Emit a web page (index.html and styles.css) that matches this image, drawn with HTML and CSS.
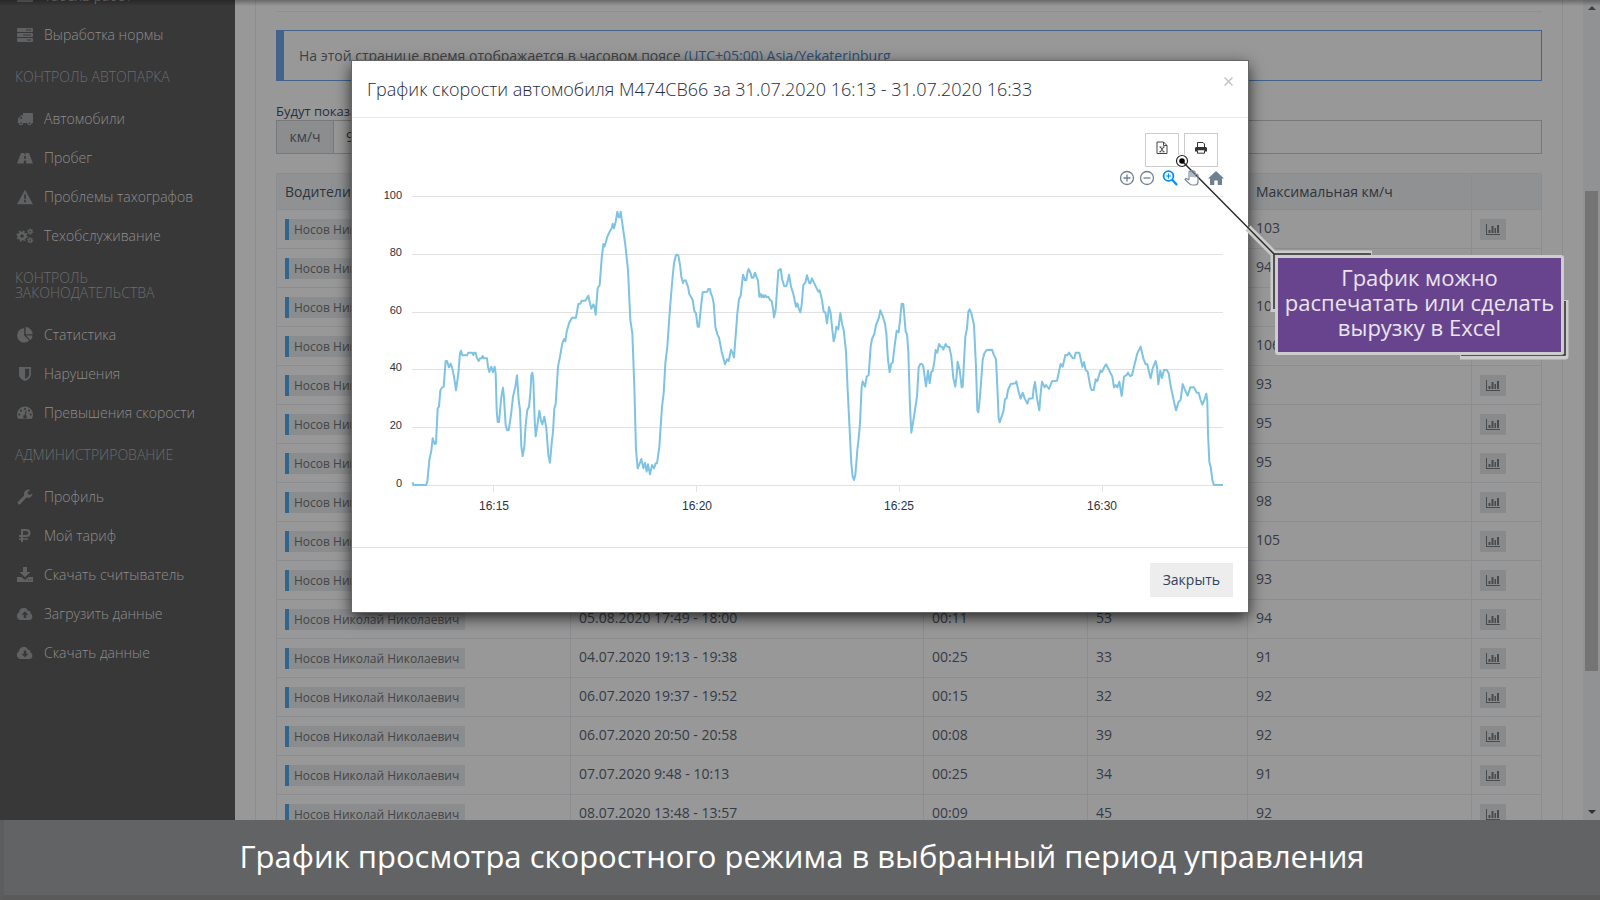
FILE: index.html
```html
<!DOCTYPE html>
<html lang="ru">
<head>
<meta charset="utf-8">
<title>График скорости</title>
<link rel="stylesheet" href="styles.css">
</head>
<body>
<svg class="sprite" aria-hidden="true">
  <symbol id="i-calendar" viewBox="0 0 16 16"><path d="M0 2h16v12H0z"/></symbol>
  <symbol id="i-server" viewBox="0 0 16 16"><path fill-rule="evenodd" d="M.8 1h14.4l.8.8v2.6l-.8.6H.8L0 4.400V1.800zM9 2.500v1h5v-1zM.8 6h14.400l.8.8v2.600l-.8.6H.8L0 9.400V6.800zM6 7.500v1h8v-1zM.8 11h14.400l.8.8v2.400l-.8.8H.8l-.8-.8v-2.400zM10 12.500v1h4v-1z"/></symbol>
  <symbol id="i-truck" viewBox="0 0 16 16"><path fill-rule="evenodd" d="M6 2h9.500l.5.5V12h-1.500a2 2 0 0 1-4 0H6a2 2 0 0 1-4 0H.5v-1l.5-.5V7.500L4 4.300h2zM4.400 5.500L2.300 7.800H5V5.500z"/><circle cx="4" cy="12.300" r="2"/><circle cx="12.500" cy="12.300" r="2"/><circle class="hole" cx="4" cy="12.300" r=".9"/><circle class="hole" cx="12.500" cy="12.300" r=".9"/></symbol>
  <symbol id="i-road" viewBox="0 0 16 16"><path fill-rule="evenodd" d="M4 3h3.500l-.2 1.500h1.400L8.500 3H12l4 10.500H9.300L9 10.500H7l-.3 3H0zM7.200 6L7 8.800h2L8.800 6z"/></symbol>
  <symbol id="i-warn" viewBox="0 0 16 16"><path fill-rule="evenodd" d="M8 .8L16 15.200H0zM7 5.500l.3 4.800h1.400L9 5.500zM7 11.300v2h2v-2z"/></symbol>
  <symbol id="i-cogs" viewBox="0 0 17 16"><g fill="none" stroke="currentColor"><circle cx="5.500" cy="8" r="3.100" stroke-width="2.500"/><circle cx="5.500" cy="8" r="4.900" stroke-width="1.500" stroke-dasharray="2 1.850"/><circle cx="13.700" cy="3.600" r="1.600" stroke-width="1.500"/><circle cx="13.700" cy="3.600" r="2.700" stroke-width="1" stroke-dasharray="1.400 1.430"/><circle cx="13.700" cy="12.300" r="1.600" stroke-width="1.500"/><circle cx="13.700" cy="12.300" r="2.700" stroke-width="1" stroke-dasharray="1.400 1.430"/></g></symbol>
  <symbol id="i-pie" viewBox="0 0 16 16"><path d="M7.200 1.200v7.300l5.100 5.100A7.200 7.200 0 1 1 7.200 1.200zM8.600 0a7.200 7.200 0 0 1 7 7.200h-7zM9 8.500h6.600a7.200 7.200 0 0 1-2 4.800z"/></symbol>
  <symbol id="i-shield" viewBox="0 0 16 16"><path fill-rule="evenodd" d="M2 1h12v7c0 4-3 5.700-6 7-3-1.300-6-3-6-7zM8 2.800V13c2.300-1.200 4.200-2.500 4.200-5V2.800z"/></symbol>
  <symbol id="i-gauge" viewBox="0 0 16 16"><path d="M0 9.500a8 8 0 0 1 16 0c0 1.600-.5 3-1.200 4.300H1.200A8 8 0 0 1 0 9.500z"/><g class="hole"><circle cx="2.300" cy="9.600" r="1.100"/><circle cx="4" cy="5.600" r="1.100"/><circle cx="8" cy="4" r="1.100"/><circle cx="12" cy="5.600" r="1.100"/><circle cx="13.700" cy="9.600" r="1.100"/><path d="M8.700 5.800l.9.300-.8 4a1.800 1.800 0 1 1-1.100-.2z"/></g></symbol>
  <symbol id="i-wrench" viewBox="0 0 16 16"><path d="M1 12.800l6.200-6.200A4.600 4.600 0 0 1 13.500.900L10.800 2.700v2.200l2 1.100 2.700-1.700c.2 2.700-2.500 5.500-6 4.300L3.300 15a1.600 1.600 0 0 1-2.300-2.200z"/></symbol>
  <symbol id="i-rub" viewBox="0 0 16 16"><path fill-rule="evenodd" d="M4 1h5.500a4 4 0 0 1 0 8H6v1.200h5v1.600H6V14H4v-2.200H2v-1.600h2V9H2V7h2zm2 1.900V7h3.300a2 2 0 0 0 0-4.100z"/></symbol>
  <symbol id="i-download" viewBox="0 0 16 16"><path fill-rule="evenodd" d="M6 0h4v5h3.500L8 10.300 2.500 5H6zM0 10h4.500L8 13l3.500-3H16v5H0zM11 12.300v1h1v-1zM13.300 12.300v1h1v-1z"/></symbol>
  <symbol id="i-cloudup" viewBox="0 0 17 16"><path fill-rule="evenodd" d="M4 14a4 4 0 0 1-1.500-7.500 4.700 4.700 0 0 1 9-1.800A2.500 2.500 0 0 1 14 7.500 3.500 3.500 0 0 1 13.500 14zM8.500 5.300L5 8.800h2.300V12h2.400V8.800H12z"/></symbol>
  <symbol id="i-clouddown" viewBox="0 0 17 16"><path fill-rule="evenodd" d="M4 14a4 4 0 0 1-1.500-7.500 4.700 4.700 0 0 1 9-1.800A2.500 2.500 0 0 1 14 7.500 3.500 3.500 0 0 1 13.500 14zM7.300 5.500v3.200H5l3.500 3.500L12 8.700H9.700V5.500z"/></symbol>
  <symbol id="i-bars" viewBox="0 0 14 12"><path d="M0 0h1v10h13v1H0zM2.500 6h2v3h-2zM5.500 2h2v7h-2zM8.500 4h1.500v5H8.500zM11 1h2v8h-2z"/></symbol>
</svg>
<div class="app">
  <div class="page">
    <nav class="sidebar">
      <a class="nav-item" href="#"><svg class="icon"><use href="#i-calendar"/></svg>Табель работ</a>
      <a class="nav-item" href="#"><svg class="icon"><use href="#i-server"/></svg>Выработка нормы</a>
      <h3 class="nav-head">КОНТРОЛЬ АВТОПАРКА</h3>
      <a class="nav-item" href="#"><svg class="icon"><use href="#i-truck"/></svg>Автомобили</a>
      <a class="nav-item" href="#"><svg class="icon"><use href="#i-road"/></svg>Пробег</a>
      <a class="nav-item" href="#"><svg class="icon"><use href="#i-warn"/></svg>Проблемы тахографов</a>
      <a class="nav-item" href="#"><svg class="icon"><use href="#i-cogs"/></svg>Техобслуживание</a>
      <h3 class="nav-head">КОНТРОЛЬ ЗАКОНОДАТЕЛЬСТВА</h3>
      <a class="nav-item" href="#"><svg class="icon"><use href="#i-pie"/></svg>Статистика</a>
      <a class="nav-item" href="#"><svg class="icon"><use href="#i-shield"/></svg>Нарушения</a>
      <a class="nav-item" href="#"><svg class="icon"><use href="#i-gauge"/></svg>Превышения скорости</a>
      <h3 class="nav-head">АДМИНИСТРИРОВАНИЕ</h3>
      <a class="nav-item" href="#"><svg class="icon"><use href="#i-wrench"/></svg>Профиль</a>
      <a class="nav-item" href="#"><svg class="icon"><use href="#i-rub"/></svg>Мой тариф</a>
      <a class="nav-item" href="#"><svg class="icon"><use href="#i-download"/></svg>Скачать считыватель</a>
      <a class="nav-item" href="#"><svg class="icon"><use href="#i-cloudup"/></svg>Загрузить данные</a>
      <a class="nav-item" href="#"><svg class="icon"><use href="#i-clouddown"/></svg>Скачать данные</a>
    </nav>
    <main class="content">
      <div class="portlet">
        <div class="rule"></div>
        <div class="note">На этой странице время отображается в часовом поясе <a href="#">(UTC+05:00) Asia/Yekaterinburg</a></div>
        <label class="field-label" for="limit">Будут показаны</label>
        <div class="input-group"><span class="addon">км/ч</span><input id="limit" type="text" value="90"></div>
        <table class="grid">
          <colgroup><col class="c-driver"><col class="c-period"><col class="c-time"><col class="c-avg"><col class="c-max"><col class="c-act"></colgroup>
          <thead><tr><th>Водители</th><th></th><th></th><th></th><th>Максимальная км/ч</th><th></th></tr></thead>
          <tbody>
            <tr><td><span class="chip">Носов Николай Николаевич</span></td><td></td><td></td><td></td><td>103</td><td><button class="chart-btn" aria-label="График"><svg><use href="#i-bars"/></svg></button></td></tr>
            <tr><td><span class="chip">Носов Николай Николаевич</span></td><td></td><td></td><td></td><td>94</td><td><button class="chart-btn" aria-label="График"><svg><use href="#i-bars"/></svg></button></td></tr>
            <tr><td><span class="chip">Носов Николай Николаевич</span></td><td></td><td></td><td></td><td>101</td><td><button class="chart-btn" aria-label="График"><svg><use href="#i-bars"/></svg></button></td></tr>
            <tr><td><span class="chip">Носов Николай Николаевич</span></td><td></td><td></td><td></td><td>106</td><td><button class="chart-btn" aria-label="График"><svg><use href="#i-bars"/></svg></button></td></tr>
            <tr><td><span class="chip">Носов Николай Николаевич</span></td><td></td><td></td><td></td><td>93</td><td><button class="chart-btn" aria-label="График"><svg><use href="#i-bars"/></svg></button></td></tr>
            <tr><td><span class="chip">Носов Николай Николаевич</span></td><td></td><td></td><td></td><td>95</td><td><button class="chart-btn" aria-label="График"><svg><use href="#i-bars"/></svg></button></td></tr>
            <tr><td><span class="chip">Носов Николай Николаевич</span></td><td></td><td></td><td></td><td>95</td><td><button class="chart-btn" aria-label="График"><svg><use href="#i-bars"/></svg></button></td></tr>
            <tr><td><span class="chip">Носов Николай Николаевич</span></td><td></td><td></td><td></td><td>98</td><td><button class="chart-btn" aria-label="График"><svg><use href="#i-bars"/></svg></button></td></tr>
            <tr><td><span class="chip">Носов Николай Николаевич</span></td><td></td><td></td><td></td><td>105</td><td><button class="chart-btn" aria-label="График"><svg><use href="#i-bars"/></svg></button></td></tr>
            <tr><td><span class="chip">Носов Николай Николаевич</span></td><td></td><td></td><td></td><td>93</td><td><button class="chart-btn" aria-label="График"><svg><use href="#i-bars"/></svg></button></td></tr>
            <tr><td><span class="chip">Носов Николай Николаевич</span></td><td>05.08.2020 17:49 - 18:00</td><td>00:11</td><td>53</td><td>94</td><td><button class="chart-btn" aria-label="График"><svg><use href="#i-bars"/></svg></button></td></tr>
            <tr><td><span class="chip">Носов Николай Николаевич</span></td><td>04.07.2020 19:13 - 19:38</td><td>00:25</td><td>33</td><td>91</td><td><button class="chart-btn" aria-label="График"><svg><use href="#i-bars"/></svg></button></td></tr>
            <tr><td><span class="chip">Носов Николай Николаевич</span></td><td>06.07.2020 19:37 - 19:52</td><td>00:15</td><td>32</td><td>92</td><td><button class="chart-btn" aria-label="График"><svg><use href="#i-bars"/></svg></button></td></tr>
            <tr><td><span class="chip">Носов Николай Николаевич</span></td><td>06.07.2020 20:50 - 20:58</td><td>00:08</td><td>39</td><td>92</td><td><button class="chart-btn" aria-label="График"><svg><use href="#i-bars"/></svg></button></td></tr>
            <tr><td><span class="chip">Носов Николай Николаевич</span></td><td>07.07.2020 9:48 - 10:13</td><td>00:25</td><td>34</td><td>91</td><td><button class="chart-btn" aria-label="График"><svg><use href="#i-bars"/></svg></button></td></tr>
            <tr><td><span class="chip">Носов Николай Николаевич</span></td><td>08.07.2020 13:48 - 13:57</td><td>00:09</td><td>45</td><td>92</td><td><button class="chart-btn" aria-label="График"><svg><use href="#i-bars"/></svg></button></td></tr>
          </tbody>
        </table>
      </div>
    </main>
    <div class="scrollbar"><span class="arrow up"></span><span class="before"></span><span class="thumb"></span><span class="after"></span><span class="arrow down"></span></div>
    <div class="top-shade"></div>

    <div class="modal" role="dialog" aria-labelledby="modal-title">
      <header class="modal-head">
        <h4 id="modal-title">График скорости автомобиля М474СВ66 за 31.07.2020 16:13 - 31.07.2020 16:33</h4>
        <button class="close" aria-label="Закрыть окно"><svg width="9" height="9" viewBox="0 0 9 9"><path d="M.5.5l8 8M8.500.5l-8 8" stroke="#c4c4c4" stroke-width="1.500"/></svg></button>
      </header>
      <div class="modal-body">
        <div class="exports">
          <button aria-label="Excel"><svg width="12" height="14" viewBox="0 0 12 14"><path d="M1 1h6.500L11 4.500V12.500H1zM7.500 1v3.500H11" fill="none" stroke="#444" stroke-width="1"/><path d="M3.500 6h2M6.700 6h2M3.300 10.800h2M6.500 10.800h2M4.300 6l3.400 4.800M7.700 6l-3.400 4.800" stroke="#444" stroke-width="1" fill="none"/></svg></button>
          <button aria-label="Печать"><svg width="12" height="14" viewBox="0 0 12 14"><path d="M2.500 6V1.500h5.500l1.500 1.500v3M2.500 9.500v2.700h7V9.500" fill="none" stroke="#333" stroke-width="1"/><path d="M1 6h10l1 1v3.500H9.500V9.300h-7v1.200H0V7z" fill="#333"/></svg></button>
        </div>
        <div class="tools">
          <button aria-label="Увеличить"><svg width="16" height="16" viewBox="0 0 16 16" fill="none" stroke="#6e8192" stroke-width="1.300"><circle cx="8" cy="8" r="6.500"/><path d="M8 4.500v7M4.500 8h7"/></svg></button>
          <button aria-label="Уменьшить"><svg width="16" height="16" viewBox="0 0 16 16" fill="none" stroke="#6e8192" stroke-width="1.300"><circle cx="8" cy="8" r="6.500"/><path d="M4.500 8h7"/></svg></button>
          <button class="wide" aria-label="Выделение"><svg width="16" height="16" viewBox="0 0 16 16" fill="none" stroke="#008ffb" stroke-width="1.800"><circle cx="6.500" cy="6" r="4.900"/><path d="M10 9.500l5 5.500" stroke-width="2.200"/><path d="M6.500 3.500v5M4 6h5" stroke-width="1.200"/></svg></button>
          <button aria-label="Перемещение"><svg width="16" height="16" viewBox="0 0 16 16" fill="none" stroke="#7d8d9a" stroke-width="1.200"><path d="M5 10V2.200a1 1 0 0 1 2 0V7M7 7V1.500a1 1 0 0 1 2 0V7M9 7V2.200a1 1 0 0 1 2 0V7M11 7.500v-2a1.500 1.500 0 0 1 3 0V12c0 2-1 3-3 3H8c-1.500 0-2-.5-3-1.800L1 9.500c.5-1.200 1.700-1 2.500-.5L5 10"/></svg></button>
          <button aria-label="Сброс"><svg width="16" height="16" viewBox="0 0 16 16"><path d="M8 1l8 7.500h-2V15H9.700v-4.500H6.300V15H2V8.500H0z" fill="#6e8192"/></svg></button>
        </div>
        <svg class="chart" viewBox="0 0 866 345">
          <g stroke="#e2e2e2" stroke-width="1"><path d="M45 9.500H856M45 67.500H856M45 125.500H856M45 182.500H856M45 240.500H856M45 298.500H856M126.500 298v7M329.500 298v7M532.500 298v7M735.500 298v7" fill="none"/></g>
          <g class="y-axis"><text x="35" y="12">100</text><text x="35" y="69">80</text><text x="35" y="127">60</text><text x="35" y="184">40</text><text x="35" y="242">20</text><text x="35" y="300">0</text></g>
          <g class="x-axis"><text x="127" y="323">16:15</text><text x="330" y="323">16:20</text><text x="532" y="323">16:25</text><text x="735" y="323">16:30</text></g>
          <g class="series" transform="translate(33 -7) scale(.33333)">
            <polyline points="38,907 40,915 78,915 82,905 88,840 94,812 98,775 104,792 108,790 113,685 117,680 121,632 126,622 131,620 137,543 141,543 147,562 152,551 157,565 162,590 168,631 175,580 180,520 183,512 187,526 201,526 205,518 217,518 220,525 223,518 227,518 231,535 236,543 240,535 245,535 248,528 252,535 261,535 264,560 268,576 274,560 279,577 284,560 287,580 290,690 293,726 297,726 304,650 309,623 312,655 317,735 321,751 326,750 333,705 339,650 346,620 351,586 356,660 360,690 364,800 368,828 373,800 377,735 382,690 387,680 391,640 394,585 397,578 400,600 404,720 407,769 413,730 418,692 423,722 427,733 433,710 439,745 445,825 450,848 455,790 459,755 463,685 467,672 474,560 480,530 487,490 492,477 496,484 500,455 507,430 516,413 528,413 535,372 541,371 545,362 556,362 565,347 570,370 574,386 580,373 583,380 587,404 593,325 599,315 605,235 610,192 614,199 622,170 630,153 635,145 638,131 642,145 647,125 652,95 656,112 659,112 662,95 667,130 676,195 684,270 691,420 697,460 703,620 708,810 713,865 718,853 724,837 730,865 735,848 740,875 744,853 750,883 756,855 762,865 767,850 771,850 778,800 786,680 791,640 796,550 802,500 810,385 817,300 822,250 828,224"/>
            <polyline transform="translate(780 0)" points="48,223 55,226 60,255 64,290 69,309 71,302 77,301 84,320 88,342 98,360 103,393 108,400 113,440 117,440 123,380 128,337 142,335 145,327 150,327 153,342 157,350 161,370 166,440 172,463 177,473 185,515 195,553 201,538 206,543 213,509 218,520 222,532 226,480 232,400 237,357 242,348 246,310 249,284 255,301 259,300 263,275 266,267 272,280 275,293 280,293 285,278 290,292 294,302 298,350 302,342 305,352 309,345 312,352 316,346 320,352 325,350 330,360 335,363 339,385 342,412 347,390 351,330 355,272 362,267 367,300 373,319 379,318 383,305 387,284 393,320 400,342 408,380 412,370 416,385 421,397 425,375 430,315 436,308 441,286 448,310 451,310 456,295 463,310 470,325 475,335 479,331 486,360 491,395 496,397 501,430 507,381 512,400 517,450 521,484 525,470 529,440 535,448 541,399 547,436 551,450 558,515 563,630 569,750 574,850 578,890 582,900 586,885 592,810 597,765 600,730 605,620 608,604 615,620 620,590 626,585 632,500 636,477 643,462 648,435 657,413 661,391 668,408 675,432 679,460 684,540 689,576 694,550 698,548 703,505 710,452 716,457 720,420 725,371 730,372 737,455 741,462 745,515 750,680 754,758 762,710 771,650 776,562 781,552 787,552"/>
            <polyline transform="translate(1560 0)" points="7,552 10,560 18,619 24,572 29,610 34,575 38,573 43,545 47,510 52,518 57,492 62,500 66,500 70,509 77,492 82,500 88,501 94,530 100,595 106,620 110,585 113,545 119,570 125,622 128,620 136,470 141,445 145,395 149,388 154,400 162,435 168,560 172,690 175,697 180,650 188,540 193,520 200,510 216,509 221,523 228,538 232,620 236,715 239,727 243,715 250,695 255,658 260,654 264,630 272,612 287,610 289,604 295,632 302,656 308,638 314,655 322,671 327,656 338,655 341,625 345,606 351,655 358,691 362,640 366,605 374,622 378,615 387,627 396,604 411,602 422,552 428,560 436,525 442,526 447,518 458,535 463,535 467,518 478,518 487,560 492,546 497,570 503,575 511,620 515,630 521,630 527,598 532,604 541,572 546,576 551,565 558,553 566,568 577,590 582,622 587,615 592,622 598,605 605,648 612,590 620,585 624,578 630,588 636,586 642,560 652,520 662,500 670,535 677,553 682,553 687,575 692,595 698,565 707,543 711,560 715,613 721,572 726,594 732,570 740,570 746,580 752,618 762,665 768,691 776,665 782,660 788,612 795,630 803,647 811,622 822,622 830,638 836,638 842,660 847,674 853,660 859,641 862,665 864,760 868,845 872,860 877,900 882,915 909,915"/>
          </g>
        </svg>
      </div>
      <footer class="modal-foot"><button class="btn">Закрыть</button></footer>

      <div class="callout">
        <svg class="leader" width="400" height="220" viewBox="0 0 400 220" fill="none">
          <g stroke="#cbcbcb" stroke-width="7" stroke-linejoin="round"><path d="M78 68l26 26h98M104 94v58M395 140v56H290"/></g>
          <path d="M12 1L77 66" stroke="#fff" stroke-width="4"/>
          <circle cx="12" cy="1" r="7" fill="#fff"/>
          <path d="M12 1l92 93H201M104 94V149M395 141v54H291" stroke="#2a2a2a" stroke-width="1.500"/>
          <circle cx="12" cy="1" r="5.500" stroke="#222" stroke-width="1.200"/><circle cx="12" cy="1" r="2.800" fill="#000"/>
        </svg>
        <p class="callout-box">График можно распечатать или сделать вырузку в Excel</p>
      </div>
    </div>
  </div>
  <div class="caption">График просмотра скоростного режима в выбранный период управления</div>
</div>
</body>
</html>
```
FILE: styles.css
```css
* { box-sizing: border-box; }
body { margin: 0; font-family: "Open Sans", "Noto Sans", sans-serif; font-size: 14px; line-height: 20px; color: #2f3a48; }
button, input { font: inherit; color: inherit; }
button { padding: 0; border: 0; background: none; }
.sprite { display: none; }
.app { display: flex; flex-direction: column; height: 100vh; overflow: hidden; }
.page { position: relative; flex: 1; min-height: 0; display: flex; overflow: hidden; background: #989898; }

.sidebar { flex: 0 0 235px; margin-top: -24px; background: #383838; font-weight: 300; }
.nav-item { display: flex; align-items: center; gap: 10px; height: 39px; padding: 0 15px 0 16px; color: #8e8e8e; text-decoration: none; white-space: nowrap; }
.icon { width: 18px; height: 16px; color: #5f6163; fill: currentColor; }
.hole { fill: #383838; }
.nav-head { margin: 0; padding: 15px; width: 200px; font-size: 14px; line-height: 15px; font-weight: 300; color: #6a6d70; }

.content { flex: 1; min-width: 0; padding: 0 20px; }
.portlet { height: 1000px; padding: 0 20px; border: solid #8b8d90; border-width: 0 1px; }
.rule { height: 12px; margin-bottom: 18px; border-bottom: 1px solid #8f8f8f; }
.note { height: 51px; padding: 15px; border: 1px solid #41638c; border-left-width: 8px; color: #3f4245; white-space: nowrap; }
.note a { color: #2a4f78; text-decoration: none; }
.field-label { display: block; margin-top: 21px; font-size: 13px; line-height: 18px; color: #26303c; }
.input-group { display: flex; height: 34px; margin-bottom: 19px; border: 1px solid #76787a; }
.addon { width: 57px; padding: 6px 0; text-align: center; background: #8b8d8f; border-right: 1px solid #76787a; color: #3a4148; }
.input-group input { flex: 1; min-width: 0; padding: 0 12px; border: 0; background: none; color: #333; }

.grid { width: 100%; table-layout: fixed; border-collapse: collapse; }
.grid th, .grid td { height: 39px; padding: 0 8px; border: 1px solid #8b8d91; text-align: left; font-weight: 400; vertical-align: middle; white-space: nowrap; }
.grid th { height: 36px; background: #8f9193; color: #2f343a; }
.grid td { padding-bottom: 2px; color: #353b46; }
.c-driver { width: 294px; } .c-period { width: 353px; } .c-time { width: 164px; } .c-avg { width: 160px; } .c-act { width: 70px; }
.chip { display: inline-block; height: 21px; margin-top: 3px; padding: 0 6px 0 5px; border-left: 4px solid #30658e; background: #8a8c8e; font-size: 12px; line-height: 22px; color: #444546; vertical-align: middle; }
.chart-btn { display: flex; align-items: center; justify-content: center; width: 26px; height: 21px; margin-top: 3px; background: #888a8c; }
.chart-btn svg { width: 14px; height: 12px; fill: #484a4c; }

.scrollbar { flex: 0 0 17px; display: flex; flex-direction: column; align-items: center; background: #909294; }
.arrow { width: 0; height: 0; border: 4px solid transparent; }
.up { margin-top: 2px; border-bottom-color: #404040; }
.down { margin-bottom: 2px; border-top-color: #303030; }
.before { flex: 181; } .thumb { flex: 480; width: 13px; background: #747474; } .after { flex: 139; }
.top-shade { position: absolute; inset: 0 0 auto; height: 6px; background: linear-gradient(rgba(0,0,0,.3), rgba(0,0,0,0)); }

.modal { position: absolute; top: 61px; left: 50%; width: 56%; min-width: 896px; transform: translateX(-50%); background: #fff; box-shadow: 0 0 0 1px #666, 0 5px 15px rgba(0,0,0,.8); }
.modal-head { display: flex; justify-content: space-between; height: 57px; padding: 16px 15px; border-bottom: 1px solid #e8e8e8; }
.modal-head h4 { margin: 0; font-size: 18px; line-height: 24px; font-weight: 300; color: #1f2a3c; white-space: nowrap; }
.close { display: flex; height: 9px; }
.modal-body { padding: 15px; }
.exports { display: flex; justify-content: flex-end; gap: 5px; padding-right: 15px; }
.exports button { display: flex; align-items: center; justify-content: center; width: 34px; height: 34px; padding-bottom: 4px; border: 1px solid #ccc; }
.tools { position: relative; z-index: 1; display: flex; justify-content: flex-end; gap: 4px; height: 20px; padding: 3px 9px 0 0; }
.tools button { display: flex; width: 16px; height: 16px; }
.tools .wide { margin: 0 2px 0 3px; }
.tools button:last-child { margin-left: 4px; }
.chart { display: block; width: 100%; }
.chart text { font-family: "Liberation Sans", Arial, sans-serif; fill: #2a3340; }
.y-axis { font-size: 11px; text-anchor: end; }
.x-axis { font-size: 12px; text-anchor: middle; }
.series { fill: none; stroke: #7ec3e2; stroke-width: 6; stroke-linejoin: round; }
.modal-foot { display: flex; justify-content: flex-end; padding: 15px; border-top: 1px solid #e2e2e2; }
.btn { height: 34px; padding: 0 13px; background: #ededed; color: #33435a; }

.callout { position: absolute; left: 818px; top: 99px; width: 400px; }
.leader { position: absolute; left: 0; top: 0; overflow: visible; }
.callout-box { position: absolute; left: 105px; top: 95px; width: 289px; margin: 0; padding: 7px 0 12px; border: 3px solid #cdcdcd; border-radius: 3px; background: #68448f; color: #e9e4ee; font-size: 22px; line-height: 25px; text-align: center; }

.caption { flex: 0 0 80px; padding-top: 13px; background: #626365; border-bottom: 5px solid #5a5a5b; border-left: 4px solid #5c5d5e; color: #fff; font-size: 31px; line-height: 46px; text-align: center; }
```
